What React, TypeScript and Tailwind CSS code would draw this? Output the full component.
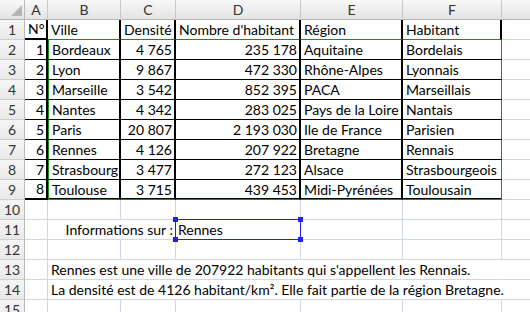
import clsx from 'clsx'

const cols = ['', 'A', 'B', 'C', 'D', 'E', 'F', '']

const table: string[][] = [
  ['N°', 'Ville', 'Densité', "Nombre d'habitant", 'Région', 'Habitant'],
  ['1', 'Bordeaux', '4\u00a0765', '235\u00a0178', 'Aquitaine', 'Bordelais'],
  ['2', 'Lyon', '9\u00a0867', '472\u00a0330', 'Rhône-Alpes', 'Lyonnais'],
  ['3', 'Marseille', '3\u00a0542', '852\u00a0395', 'PACA', 'Marseillais'],
  ['4', 'Nantes', '4\u00a0342', '283\u00a0025', 'Pays de la Loire', 'Nantais'],
  ['5', 'Paris', '20\u00a0807', '2\u00a0193\u00a0030', 'Ile de France', 'Parisien'],
  ['6', 'Rennes', '4\u00a0126', '207\u00a0922', 'Bretagne', 'Rennais'],
  ['7', 'Strasbourg', '3\u00a0477', '272\u00a0123', 'Alsace', 'Strasbourgeois'],
  ['8', 'Toulouse', '3\u00a0715', '439\u00a0453', 'Midi-Pyrénées', 'Toulousain'],
]

const extra: Record<string, string> = {
  '11-3': 'Informations sur :',
  '13-2': "Rennes est une ville de 207922 habitants qui s'appellent les Rennais.",
  '14-2': 'La densité est de 4126 habitant/km². Elle fait partie de la région Bretagne.',
}

const ROWS = 15

function tableCellClass(r: number, c: number) {
  const right = r >= 2 && (c === 1 || c === 3 || c === 4)
  return clsx(
    'flex items-end whitespace-nowrap text-black',
    right ? 'justify-end pr-[2px]' : 'pl-[3px]',
    c < 6 || r === 1 ? 'border-r-2 border-r-black' : 'border-r border-r-[#1f8a1f]',
    c === 2 && r >= 2 && 'border-l border-l-[#1f8a1f]',
    c === 1 && (r === 1 || r === 9) && 'border-b-2 border-b-black',
    c === 1 && r > 1 && r < 9 && 'border-b border-b-black',
    c > 1 && r === 1 && 'border-b border-b-[#1f8a1f]',
    c > 1 && r > 1 && r < 9 && 'border-b border-b-black',
    c > 1 && r === 9 && 'border-b border-b-[#1f8a1f] shadow-[inset_0_-1px_0_#000]'
  )
}

function gridCellClass(r: number, c: number) {
  const hideRight =
    (r === 11 && c === 2) || ((r === 13 || r === 14) && c >= 2 && c <= 6)
  return clsx(
    'flex items-end whitespace-nowrap text-black border-b border-b-[#d0d7e5]',
    c < 7 && (hideRight ? 'border-r border-r-transparent' : 'border-r border-r-[#d0d7e5]'),
    r === 11 && c === 3 ? 'justify-end pr-[2px]' : 'pl-[3px]'
  )
}

function Cell({ r, c }: { r: number; c: number }) {
  if (c === 0) {
    return (
      <div className="flex items-end justify-center border-r border-b border-r-[#b9b9b9] border-b-[#cfcfcf] bg-linear-to-b from-[#f6f6f6] to-[#e9e9e9] text-[#333]">
        {r}
      </div>
    )
  }
  if (r === 11 && c === 4) {
    return (
      <div className="relative z-10 -mt-px -ml-px flex items-end border border-[#2020f0] pl-[2px] text-black">
        Rennes
        <span className="absolute -top-[3px] -left-[3px] h-[5px] w-[5px] bg-[#2020f0]" />
        <span className="absolute -bottom-[3px] -left-[3px] h-[5px] w-[5px] bg-[#2020f0]" />
        <span className="absolute -top-[3px] -right-[3px] h-[5px] w-[5px] bg-[#2020f0]" />
        <span className="absolute -right-[3px] -bottom-[3px] h-[5px] w-[5px] bg-[#2020f0]" />
      </div>
    )
  }
  if (r <= 9 && c <= 6) {
    return <div className={tableCellClass(r, c)}>{table[r - 1][c - 1]}</div>
  }
  return <div className={gridCellClass(r, c)}>{extra[`${r}-${c}`]}</div>
}

export default function App() {
  return (
    <div className="h-[312px] w-[530px] overflow-hidden bg-white font-[Lato,sans-serif] text-[14px] leading-[19px]">
      <div className="grid grid-cols-[25px_23px_73px_55px_125px_102px_99px_28px] auto-rows-[20px]">
        {cols.map((name, c) =>
          c === 0 ? (
            <div key={c} className="border-r border-b border-r-[#b9b9b9] border-b-[#b4b4b4] bg-linear-to-b from-[#f8f8f8] to-[#e4e4e4]">
              <svg width="24" height="19" className="block">
                <polygon points="22,5 22,16 11,16" fill="#b5b5b5" />
              </svg>
            </div>
          ) : (
            <div
              key={c}
              className={clsx(
                'flex items-center justify-center border-b border-b-[#b4b4b4] bg-linear-to-b from-[#f8f8f8] to-[#e4e4e4] text-[#333]',
                c < 7 && 'border-r border-r-[#c9c9c9]'
              )}
            >
              {name}
            </div>
          )
        )}
        {Array.from({ length: ROWS }, (_, i) => i + 1).map((r) =>
          cols.map((_, c) => <Cell key={`${r}-${c}`} r={r} c={c} />)
        )}
      </div>
    </div>
  )
}
